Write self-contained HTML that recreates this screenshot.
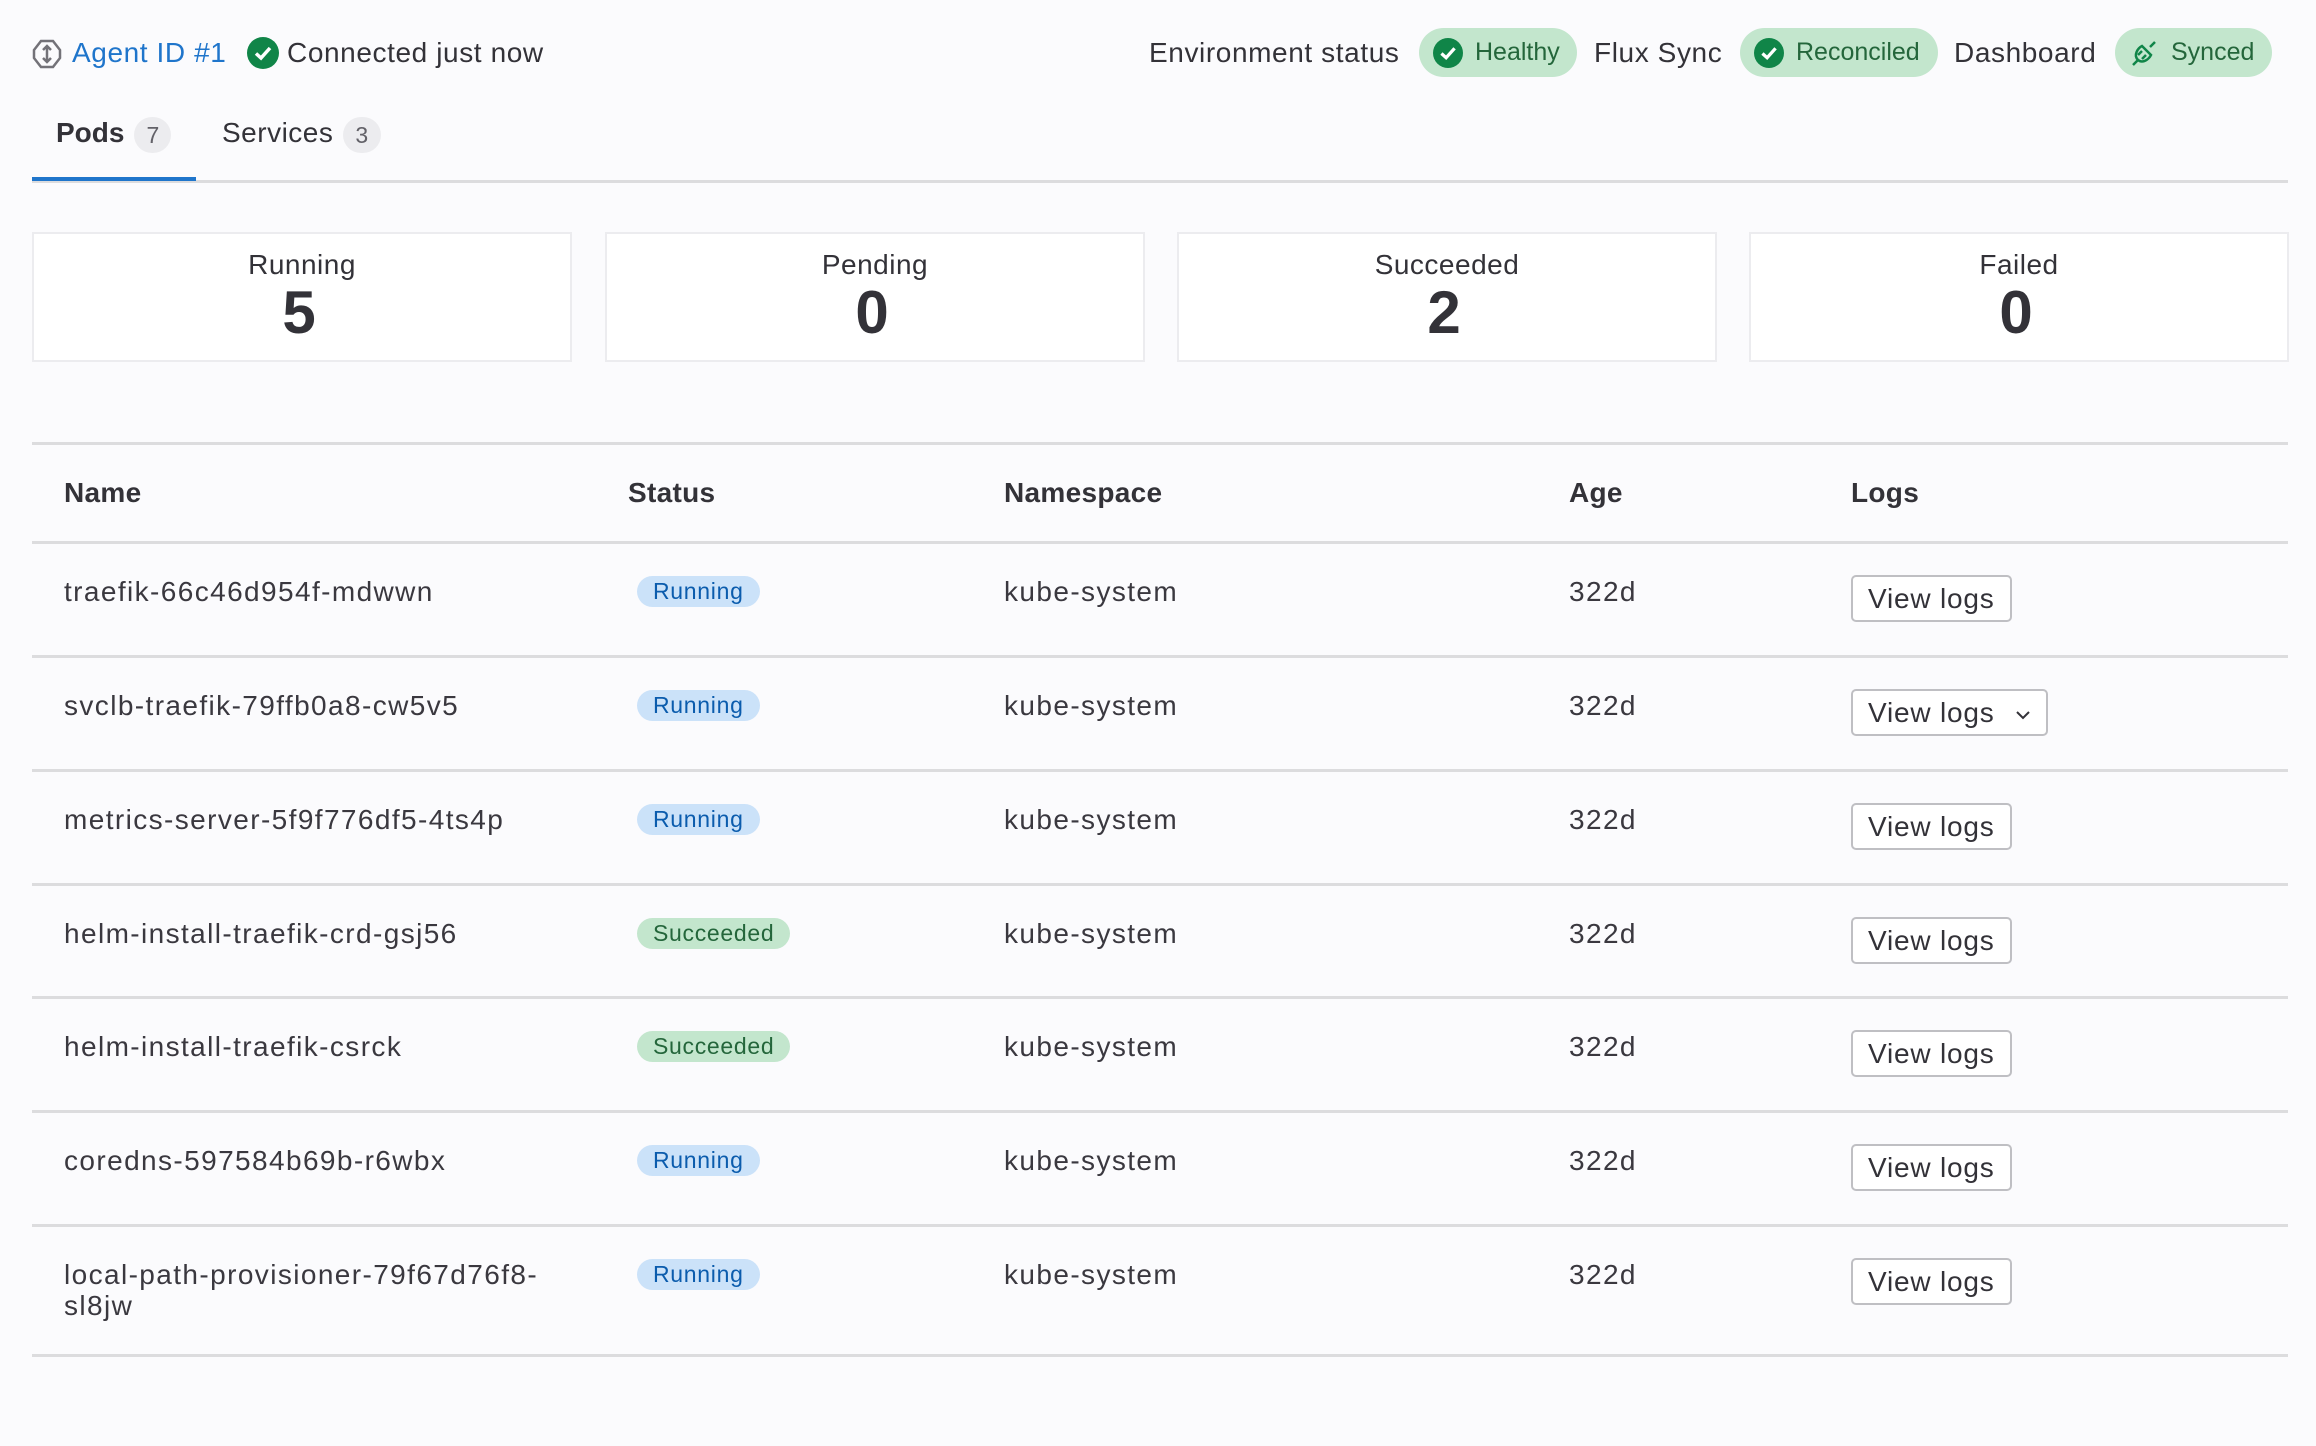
<!DOCTYPE html>
<html><head><meta charset="utf-8"><style>
*{box-sizing:border-box;margin:0;padding:0}
body{width:2316px;height:1446px;background:#fbfbfd;font-family:"Liberation Sans",sans-serif;color:#333238;position:relative;overflow:hidden}
.a{position:absolute;white-space:nowrap}
.t{font-size:28px;line-height:36px;letter-spacing:0.6px}
.pill{position:absolute;height:49px;border-radius:25px;background:#c3e6cd;color:#24663b;font-size:25px;line-height:49px;padding-left:56px}
.pill svg{position:absolute;left:14px;top:10px}
.cnt{display:inline-block;background:#ececef;border-radius:20px;color:#626168;font-size:23px;line-height:36px;height:36px;padding:0 12px;margin-left:10px;vertical-align:middle;font-weight:normal}
.card{position:absolute;top:232px;height:130px;width:540px;background:#fff;border:2px solid #ececef;text-align:center}
.card .l{font-size:28px;line-height:32px;margin-top:15px;color:#333238;letter-spacing:0.5px}
.card .n{font-size:60px;font-weight:bold;line-height:64px;color:#333238;margin-left:-6px}
.hl{position:absolute;left:32px;width:2256px;height:3px;background:#dcdcde}
.row{position:absolute;left:0;width:2316px;height:114px}
.row .c{position:absolute;top:34px;font-size:28px;line-height:32px;color:#3a383f;letter-spacing:1.4px}
.badge{position:absolute;left:637px;top:34px;height:31px;border-radius:16px;font-size:23px;line-height:31px;padding:0 16px;letter-spacing:0.7px}
.run{background:#cbe2f9;color:#0b5cad}
.suc{background:#c3e6cd;color:#24663b}
.btn{position:absolute;left:1851px;top:33px;height:47px;border:2px solid #bfbfc3;border-radius:5px;background:#fff;font-size:28px;line-height:43px;padding:0 15px;color:#333238;letter-spacing:0.8px}
.h{position:absolute;top:476px;font-size:28px;font-weight:bold;line-height:34px;letter-spacing:0.3px}
</style></head><body>
<svg class="a" style="left:32px;top:38px" width="30" height="32" viewBox="0 0 30 32"><path d="M9 3 L21 3 L28 12 L28 20 L21 29 L9 29 L2 20 L2 12 Z" fill="none" stroke="#737278" stroke-width="2.5"/><path d="M15 8 V24 M11 12 L15 8 L19 12 M11 20 L15 24 L19 20" fill="none" stroke="#737278" stroke-width="2.5"/></svg>
<div class="a t" style="left:72px;top:35px;color:#1f75cb">Agent ID #1</div>
<svg class="a" style="left:247px;top:37px" width="32" height="32" viewBox="0 0 32 32"><circle cx="16" cy="16" r="16" fill="#108548"/><path d="M9 16.5 L14 21 L23 11" fill="none" stroke="#fff" stroke-width="3.5"/></svg>
<div class="a t" style="left:287px;top:35px">Connected just now</div>

<div class="a t" style="left:1149px;top:35px">Environment status</div>
<div class="pill" style="left:1419px;top:28px;width:158px"><svg width="30" height="30" viewBox="0 0 32 32"><circle cx="16" cy="16" r="16" fill="#108548"/><path d="M9 16.5 L14 21 L23 11" fill="none" stroke="#fff" stroke-width="3.5"/></svg>Healthy</div>
<div class="a t" style="left:1594px;top:35px">Flux Sync</div>
<div class="pill" style="left:1740px;top:28px;width:198px"><svg width="30" height="30" viewBox="0 0 32 32"><circle cx="16" cy="16" r="16" fill="#108548"/><path d="M9 16.5 L14 21 L23 11" fill="none" stroke="#fff" stroke-width="3.5"/></svg>Reconciled</div>
<div class="a t" style="left:1954px;top:35px">Dashboard</div>
<div class="pill" style="left:2115px;top:28px;width:157px;padding-left:56px"><svg width="30" height="30" viewBox="0 0 30 30"><path d="M4 27 L9 22 M26 4 L21 9 M9 22 C4 17 9 10 13 8 L22 17 C20 21 14 26 9 22 Z M13 13 L9 17 M17 17 L13 21" fill="none" stroke="#108548" stroke-width="2.5"/></svg>Synced</div>

<div class="a" style="left:56px;top:114px;font-size:28px;line-height:38px;font-weight:bold">Pods<span class="cnt">7</span></div>
<div class="a" style="left:222px;top:114px;font-size:28px;line-height:38px;letter-spacing:0.5px">Services<span class="cnt">3</span></div>
<div class="hl" style="top:180px"></div>
<div class="a" style="left:32px;top:177px;width:164px;height:4px;background:#1f75cb"></div>

<div class="card" style="left:32px"><div class="l">Running</div><div class="n">5</div></div>
<div class="card" style="left:605px"><div class="l">Pending</div><div class="n">0</div></div>
<div class="card" style="left:1177px"><div class="l">Succeeded</div><div class="n">2</div></div>
<div class="card" style="left:1749px"><div class="l">Failed</div><div class="n">0</div></div>

<div class="hl" style="top:442px"></div>
<div class="h" style="left:64px">Name</div>
<div class="h" style="left:628px">Status</div>
<div class="h" style="left:1004px">Namespace</div>
<div class="h" style="left:1569px">Age</div>
<div class="h" style="left:1851px">Logs</div>
<div class="hl" style="top:541px"></div>

<div class="row" style="top:542px"><div class="c" style="left:64px">traefik-66c46d954f-mdwwn</div><div class="badge run">Running</div><div class="c" style="left:1004px">kube-system</div><div class="c" style="left:1569px">322d</div><div class="btn">View logs</div></div>
<div class="hl" style="top:655px"></div>
<div class="row" style="top:656px"><div class="c" style="left:64px">svclb-traefik-79ffb0a8-cw5v5</div><div class="badge run">Running</div><div class="c" style="left:1004px">kube-system</div><div class="c" style="left:1569px">322d</div><div class="btn">View logs <svg width="16" height="10" viewBox="0 0 16 10" style="margin-left:12px;vertical-align:middle"><path d="M2 2 L8 8 L14 2" fill="none" stroke="#333238" stroke-width="2"/></svg></div></div>
<div class="hl" style="top:769px"></div>
<div class="row" style="top:770px"><div class="c" style="left:64px">metrics-server-5f9f776df5-4ts4p</div><div class="badge run">Running</div><div class="c" style="left:1004px">kube-system</div><div class="c" style="left:1569px">322d</div><div class="btn">View logs</div></div>
<div class="hl" style="top:883px"></div>
<div class="row" style="top:884px"><div class="c" style="left:64px">helm-install-traefik-crd-gsj56</div><div class="badge suc">Succeeded</div><div class="c" style="left:1004px">kube-system</div><div class="c" style="left:1569px">322d</div><div class="btn">View logs</div></div>
<div class="hl" style="top:996px"></div>
<div class="row" style="top:997px"><div class="c" style="left:64px">helm-install-traefik-csrck</div><div class="badge suc">Succeeded</div><div class="c" style="left:1004px">kube-system</div><div class="c" style="left:1569px">322d</div><div class="btn">View logs</div></div>
<div class="hl" style="top:1110px"></div>
<div class="row" style="top:1111px"><div class="c" style="left:64px">coredns-597584b69b-r6wbx</div><div class="badge run">Running</div><div class="c" style="left:1004px">kube-system</div><div class="c" style="left:1569px">322d</div><div class="btn">View logs</div></div>
<div class="hl" style="top:1224px"></div>
<div class="row" style="top:1225px"><div class="c" style="left:64px;line-height:31px">local-path-provisioner-79f67d76f8-<br>sl8jw</div><div class="badge run">Running</div><div class="c" style="left:1004px">kube-system</div><div class="c" style="left:1569px">322d</div><div class="btn">View logs</div></div>
<div class="hl" style="top:1354px"></div>
</body></html>
